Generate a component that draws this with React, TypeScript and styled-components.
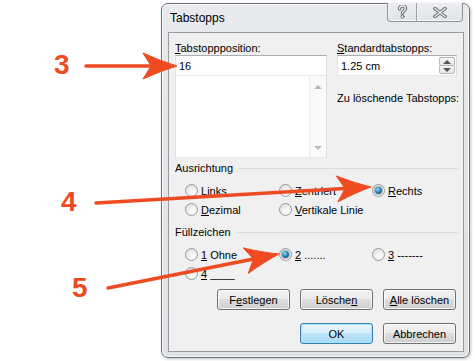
import React from 'react'
import styled, { createGlobalStyle } from 'styled-components'

const GlobalStyle = createGlobalStyle`
  html, body {
    margin: 0;
    padding: 0;
    background: #ffffff;
  }
  body {
    font-family: "Liberation Sans", Arial, sans-serif;
    color: #000;
  }
`

const Page = styled.div`
  position: relative;
  width: 475px;
  height: 361px;
  overflow: hidden;
  box-sizing: border-box;
  padding: 3px 0 0 161px;
  background: #fff;
`

const Frame = styled.div`
  width: 309px;
  height: 355px;
  box-sizing: border-box;
  display: flex;
  flex-direction: column;
  border: 1px solid #6e7278;
  border-radius: 7px;
  background: linear-gradient(#e8eaed, #dfe2e5);
  box-shadow: inset 0 0 0 1px rgba(255, 255, 255, 0.75), 1px 1px 3px rgba(0, 0, 0, 0.25);
`

const TitleBar = styled.div`
  height: 28px;
  flex-shrink: 0;
  display: flex;
  align-items: flex-start;
  padding: 0 6px 0 8px;
`

const Title = styled.div`
  flex: 1;
  margin-top: 7px;
  font-size: 12px;
  line-height: 14px;
`

const CaptionButtons = styled.div`
  display: flex;
  margin-top: -1px;
`

const CaptionButton = styled.div<{ $w: number; $pos: 'left' | 'right' }>`
  width: ${p => p.$w}px;
  height: 19px;
  box-sizing: border-box;
  display: flex;
  align-items: center;
  justify-content: center;
  border: 1px solid #8d9196;
  border-top: none;
  ${p => (p.$pos === 'left' ? 'border-right: none; border-radius: 0 0 0 4px;' : 'border-radius: 0 0 4px 0;')}
  background: linear-gradient(#eceef1, #e1e4e8);
  box-shadow: inset 0 -1px 0 rgba(255, 255, 255, 0.8), inset 1px 0 0 rgba(255, 255, 255, 0.6);
  & + & {
    border-left: 1px solid #9a9ea3;
  }
`

const Client = styled.div`
  flex: 1;
  margin: 0 5px 5px 6px;
  border: 1px solid #989ca1;
  background: #f0f0f0;
  padding: 8px 5px 0 6px;
  display: flex;
  flex-direction: column;
  font-size: 11px;
`

const TopGrid = styled.div`
  display: grid;
  grid-template-columns: 152px 120px;
  column-gap: 10px;
`

const Column = styled.div`
  display: flex;
  flex-direction: column;
`

const Label = styled.div<{ $gap?: number }>`
  height: 14px;
  line-height: 14px;
  margin-top: ${p => p.$gap ?? 0}px;
  white-space: nowrap;
`

const Edit = styled.div`
  height: 21px;
  box-sizing: border-box;
  border: 1px solid #abadb3;
  border-color: #abadb3 #dbdfe6 #e3e9ef #e2e3ea;
  background: #fff;
  display: flex;
  align-items: center;
  padding-left: 3px;
  position: relative;
`

const ListBox = styled.div`
  height: 83px;
  margin-top: -1px;
  box-sizing: border-box;
  border: 1px solid #abadb3;
  border-color: #abadb3 #dbdfe6 #e3e9ef #e2e3ea;
  background: #fff;
  display: flex;
  justify-content: flex-end;
`

const ScrollBar = styled.div`
  width: 16px;
  border-left: 1px solid #ececec;
  background: #fafafa;
  display: flex;
  flex-direction: column;
  justify-content: space-between;
  align-items: center;
  padding: 9px 0 7px;
`

const Triangle = styled.span<{ $dir: 'up' | 'down'; $color: string }>`
  width: 0;
  height: 0;
  border-left: 4px solid transparent;
  border-right: 4px solid transparent;
  ${p => (p.$dir === 'up' ? `border-bottom: 4px solid ${p.$color};` : `border-top: 4px solid ${p.$color};`)}
`

const SpinButtons = styled.div`
  position: absolute;
  right: 1px;
  top: 1px;
  bottom: 1px;
  width: 16px;
  display: flex;
  flex-direction: column;
`

const SpinHalf = styled.div`
  flex: 1;
  display: flex;
  align-items: center;
  justify-content: center;
  border: 1px solid #b5b8bd;
  border-radius: 2px;
  background: linear-gradient(#f7f7f7, #e4e4e4);
  & + & {
    margin-top: -1px;
  }
`

const GroupHeader = styled.div<{ $gap: number }>`
  display: flex;
  align-items: center;
  height: 14px;
  margin-top: ${p => p.$gap}px;
  &::after {
    content: '';
    flex: 1;
    height: 1px;
    margin-left: 6px;
    background: #dcdcdc;
  }
`

const RadioGrid = styled.div`
  display: grid;
  grid-template-columns: 94px 93px 1fr;
  grid-auto-rows: 19px;
  margin-top: 6px;
  padding-left: 10px;
`

const RadioItem = styled.label`
  display: flex;
  align-items: center;
  gap: 3px;
  white-space: nowrap;
`

const RadioCircle = styled.span<{ $checked?: boolean }>`
  width: 13px;
  height: 13px;
  box-sizing: border-box;
  border-radius: 50%;
  border: 1px solid #979a9e;
  background: radial-gradient(circle at 65% 70%, #ffffff 0, #efefef 45%, #d6d6d6 100%);
  display: flex;
  align-items: center;
  justify-content: center;
  flex-shrink: 0;
  &::after {
    content: '';
    display: ${p => (p.$checked ? 'block' : 'none')};
    width: 7px;
    height: 7px;
    border-radius: 50%;
    background: radial-gradient(circle at 40% 35%, #9fdcf8 0, #2a83b8 45%, #0d3f62 100%);
    box-shadow: 0 0 0 1px rgba(30, 80, 120, 0.35);
  }
`

const Key = styled.span`
  text-decoration: underline;
  text-underline-offset: 1px;
`

const ButtonRow = styled.div<{ $gap: number }>`
  display: flex;
  justify-content: flex-end;
  gap: 10px;
  margin-top: ${p => p.$gap}px;
  padding-right: 2px;
`

const Button = styled.div<{ $default?: boolean }>`
  width: 73px;
  height: 21px;
  box-sizing: border-box;
  display: flex;
  align-items: center;
  justify-content: center;
  border: 1px solid ${p => (p.$default ? '#3c7fb1' : '#707070')};
  border-radius: 3px;
  background: ${p =>
    p.$default
      ? 'linear-gradient(#eaf6fd 0%, #d9f0fc 45%, #bee6fd 50%, #a7d9f5 100%)'
      : 'linear-gradient(#f2f2f2 0%, #ebebeb 45%, #dddddd 50%, #cfcfcf 100%)'};
  box-shadow: inset 0 0 0 1px ${p => (p.$default ? 'rgba(160, 230, 255, 0.9)' : 'rgba(255, 255, 255, 0.75)')};
  font-size: 11px;
`

const Overlay = styled.svg`
  position: absolute;
  left: 0;
  top: 0;
  width: 475px;
  height: 361px;
  pointer-events: none;
`

const Callout = styled.span<{ $x: number; $y: number }>`
  position: absolute;
  left: ${p => p.$x}px;
  top: ${p => p.$y}px;
  font-family: "Liberation Sans", Arial, sans-serif;
  font-weight: bold;
  font-size: 28px;
  line-height: 28px;
  color: #ef4b23;
`

const ORANGE = '#ef4b23'

const makeArrow = (x1: number, y1: number, x2: number, y2: number, L = 34, W = 13, N = 8) => {
  const dx = x2 - x1
  const dy = y2 - y1
  const len = Math.hypot(dx, dy)
  const ux = dx / len
  const uy = dy / len
  const nx = -uy
  const ny = ux
  const bx = x2 - ux * L
  const by = y2 - uy * L
  const mx = x2 - ux * (L - N)
  const my = y2 - uy * (L - N)
  const ax = bx + nx * W
  const ay = by + ny * W
  const cx = bx - nx * W
  const cy = by - ny * W
  // slightly concave sides, like a hand-drawn swoosh head
  const q1x = x2 - ux * L * 0.45 + nx * W * 0.35
  const q1y = y2 - uy * L * 0.45 + ny * W * 0.35
  const q2x = x2 - ux * L * 0.45 - nx * W * 0.35
  const q2y = y2 - uy * L * 0.45 - ny * W * 0.35
  return {
    line: { x1, y1, x2: mx, y2: my },
    head: `M${x2},${y2} Q${q1x},${q1y} ${ax},${ay} L${mx},${my} L${cx},${cy} Q${q2x},${q2y} ${x2},${y2} Z`,
  }
}

const arrows = [
  makeArrow(86, 66, 177, 66),
  makeArrow(96, 203, 371, 187),
  makeArrow(108, 288, 279, 254),
]

const HelpGlyph = () => (
  <svg width="11" height="14" viewBox="0 0 11 14">
    <g fill="none" strokeLinecap="round">
      <path d="M2.5 4 C2.5 1.8 3.8 1 5.5 1 C7.4 1 8.5 2.1 8.5 3.6 C8.5 5.6 5.5 6 5.5 8.3" stroke="#6b6e72" strokeWidth="3.4" />
      <path d="M2.5 4 C2.5 1.8 3.8 1 5.5 1 C7.4 1 8.5 2.1 8.5 3.6 C8.5 5.6 5.5 6 5.5 8.3" stroke="#f2f3f5" strokeWidth="1.3" />
      <circle cx="5.5" cy="11.6" r="1.6" fill="#f2f3f5" stroke="#6b6e72" strokeWidth="1" />
    </g>
  </svg>
)

const CloseGlyph = () => (
  <svg width="14" height="11" viewBox="0 0 14 11">
    <g strokeLinecap="square">
      <path d="M2 1.5 L12 9.5 M12 1.5 L2 9.5" stroke="#6b6e72" strokeWidth="3.4" />
      <path d="M2 1.5 L12 9.5 M12 1.5 L2 9.5" stroke="#f2f3f5" strokeWidth="1.3" />
    </g>
  </svg>
)

const App: React.FC = () => {
  const alignment = [
    { key: 'L', rest: 'inks' },
    { key: 'Z', rest: 'entriert' },
    { key: 'R', rest: 'echts', checked: true },
    { key: 'D', rest: 'ezimal' },
    { key: 'V', rest: 'ertikale Linie' },
  ]
  const leaders = [
    { key: '1', rest: ' Ohne' },
    { key: '2', rest: ' .......', checked: true },
    { key: '3', rest: ' -------' },
    { key: '4', rest: ' ____' },
  ]

  return (
    <>
      <GlobalStyle />
      <Page>
        <Frame>
          <TitleBar>
            <Title>Tabstopps</Title>
            <CaptionButtons>
              <CaptionButton $w={29} $pos="left">
                <HelpGlyph />
              </CaptionButton>
              <CaptionButton $w={47} $pos="right">
                <CloseGlyph />
              </CaptionButton>
            </CaptionButtons>
          </TitleBar>
          <Client>
            <TopGrid>
              <Column>
                <Label>
                  <Key>T</Key>abstoppposition:
                </Label>
                <Edit>16</Edit>
                <ListBox>
                  <ScrollBar>
                    <Triangle $dir="up" $color="#b9b9b9" />
                    <Triangle $dir="down" $color="#b9b9b9" />
                  </ScrollBar>
                </ListBox>
              </Column>
              <Column>
                <Label>
                  <Key>S</Key>tandardtabstopps:
                </Label>
                <Edit>
                  1.25 cm
                  <SpinButtons>
                    <SpinHalf>
                      <Triangle $dir="up" $color="#555" />
                    </SpinHalf>
                    <SpinHalf>
                      <Triangle $dir="down" $color="#555" />
                    </SpinHalf>
                  </SpinButtons>
                </Edit>
                <Label $gap={15}>Zu löschende Tabstopps:</Label>
              </Column>
            </TopGrid>

            <GroupHeader $gap={3}>Ausrichtung</GroupHeader>
            <RadioGrid>
              {alignment.map((item, i) => (
                <RadioItem key={i}>
                  <RadioCircle $checked={item.checked} />
                  <span>
                    <Key>{item.key}</Key>
                    {item.rest}
                  </span>
                </RadioItem>
              ))}
            </RadioGrid>

            <GroupHeader $gap={6}>Füllzeichen</GroupHeader>
            <RadioGrid>
              {leaders.map((item, i) => (
                <RadioItem key={i}>
                  <RadioCircle $checked={item.checked} />
                  <span>
                    <Key>{item.key}</Key>
                    {item.rest}
                  </span>
                </RadioItem>
              ))}
            </RadioGrid>

            <ButtonRow $gap={6}>
              <Button>
                F<Key>e</Key>stlegen
              </Button>
              <Button>
                Lösche<Key>n</Key>
              </Button>
              <Button>
                <Key>A</Key>lle löschen
              </Button>
            </ButtonRow>
            <ButtonRow $gap={13}>
              <Button $default>OK</Button>
              <Button>Abbrechen</Button>
            </ButtonRow>
          </Client>
        </Frame>

        <Overlay viewBox="0 0 475 361">
          {arrows.map((a, i) => (
            <g key={i} fill={ORANGE} stroke={ORANGE}>
              <line {...a.line} strokeWidth="3.5" strokeLinecap="round" />
              <path d={a.head} strokeWidth="1" strokeLinejoin="round" />
            </g>
          ))}
        </Overlay>
        <Callout $x={54} $y={51}>3</Callout>
        <Callout $x={61} $y={188}>4</Callout>
        <Callout $x={72} $y={274}>5</Callout>
      </Page>
    </>
  )
}

export default App
